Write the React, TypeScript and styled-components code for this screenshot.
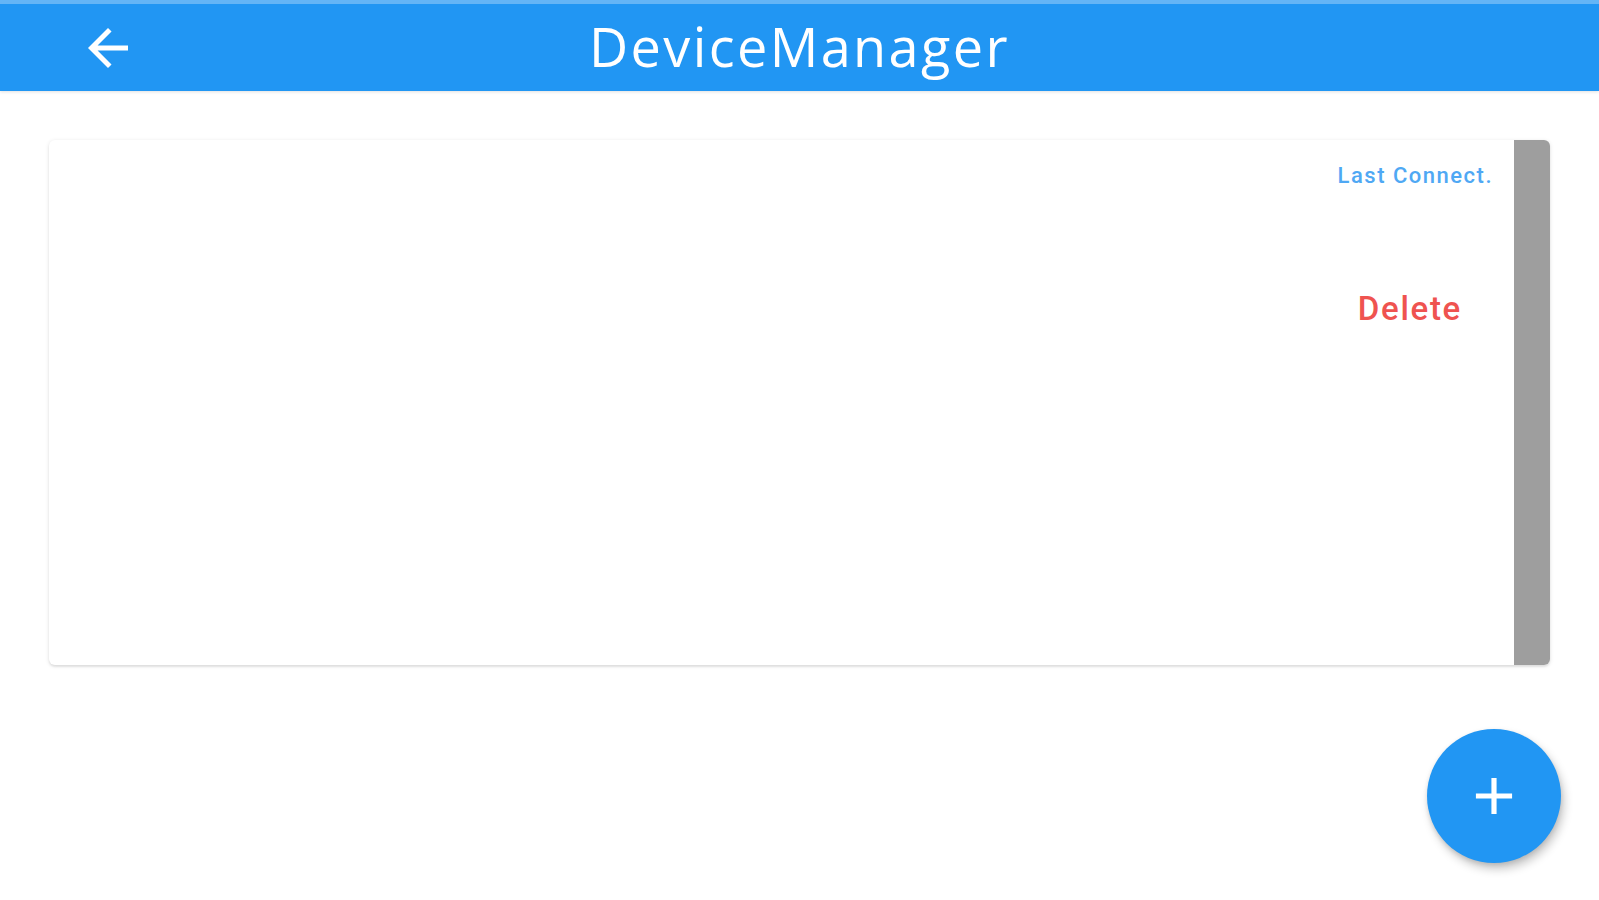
import React from 'react';
import styled, { createGlobalStyle } from 'styled-components';

const GlobalStyle = createGlobalStyle`
  html, body {
    margin: 0;
    padding: 0;
    background: #ffffff;
    font-family: Roboto, "Liberation Sans", Arial, sans-serif;
  }
`;

const Page = styled.div`
  display: flex;
  flex-direction: column;
  min-height: 900px;
  background: #ffffff;
`;

const AppBar = styled.header`
  display: flex;
  align-items: center;
  height: 87px;
  border-top: 4px solid #64b5f6;
  background: #2196f3;
  box-shadow: 0 1px 3px rgba(0, 0, 0, 0.12);
  padding-left: 78px;
`;

const BackButton = styled.button`
  display: flex;
  align-items: center;
  justify-content: center;
  width: 60px;
  height: 60px;
  padding: 0;
  border: none;
  background: transparent;
  color: #ffffff;
  cursor: pointer;
`;

const Title = styled.h1`
  margin: 0 0 4px 451px;
  color: #ffffff;
  font-family: "Open Sans", Roboto, sans-serif;
  font-size: 54px;
  font-weight: 400;
  letter-spacing: 2.4px;
  line-height: 1;
`;

const Content = styled.main`
  display: flex;
  flex-direction: column;
  padding: 49px 49px 0 49px;
`;

const Card = styled.section`
  display: flex;
  height: 525px;
  background: #ffffff;
  border-radius: 6px;
  overflow: hidden;
  box-shadow: 0 1px 4px rgba(0, 0, 0, 0.12), 0 2px 2px rgba(0, 0, 0, 0.06);
`;

const CardBody = styled.div`
  flex: 1;
  display: flex;
  flex-direction: column;
  align-items: flex-end;
`;

const LastConnect = styled.span`
  margin: 25px 21px 0 0;
  color: #4fa8f4;
  font-size: 22px;
  font-weight: 500;
  letter-spacing: 1.5px;
  line-height: 1;
`;

const DeleteButton = styled.button`
  margin: 105px 52px 0 0;
  padding: 0;
  border: none;
  background: transparent;
  color: #ef5350;
  font-family: inherit;
  font-size: 33px;
  font-weight: 500;
  letter-spacing: 1.7px;
  line-height: 1;
  cursor: pointer;
`;

const SideBar = styled.div`
  width: 36px;
  background: #9e9e9e;
`;

const Fab = styled.button`
  align-self: flex-end;
  display: flex;
  align-items: center;
  justify-content: center;
  width: 134px;
  height: 134px;
  margin: 64px -11px 0 0;
  padding: 0;
  border: none;
  border-radius: 50%;
  background: #2196f3;
  color: #ffffff;
  box-shadow: 3px 6px 10px rgba(0, 0, 0, 0.22), 0 2px 4px rgba(0, 0, 0, 0.1);
  cursor: pointer;
`;

const App = () => {
  return (
    <Page>
      <GlobalStyle />
      <AppBar>
        <BackButton aria-label="back">
          <svg width="60" height="60" viewBox="0 0 24 24" fill="currentColor">
            <path d="M20 11H7.83l5.59-5.59L12 4l-8 8 8 8 1.41-1.41L7.83 13H20v-2z" />
          </svg>
        </BackButton>
        <Title>DeviceManager</Title>
      </AppBar>
      <Content>
        <Card>
          <CardBody>
            <LastConnect>Last Connect.</LastConnect>
            <DeleteButton>Delete</DeleteButton>
          </CardBody>
          <SideBar />
        </Card>
        <Fab aria-label="add">
          <svg width="62" height="62" viewBox="0 0 24 24" fill="currentColor">
            <path d="M19 13h-6v6h-2v-6H5v-2h6V5h2v6h6v2z" />
          </svg>
        </Fab>
      </Content>
    </Page>
  );
};

export default App;
